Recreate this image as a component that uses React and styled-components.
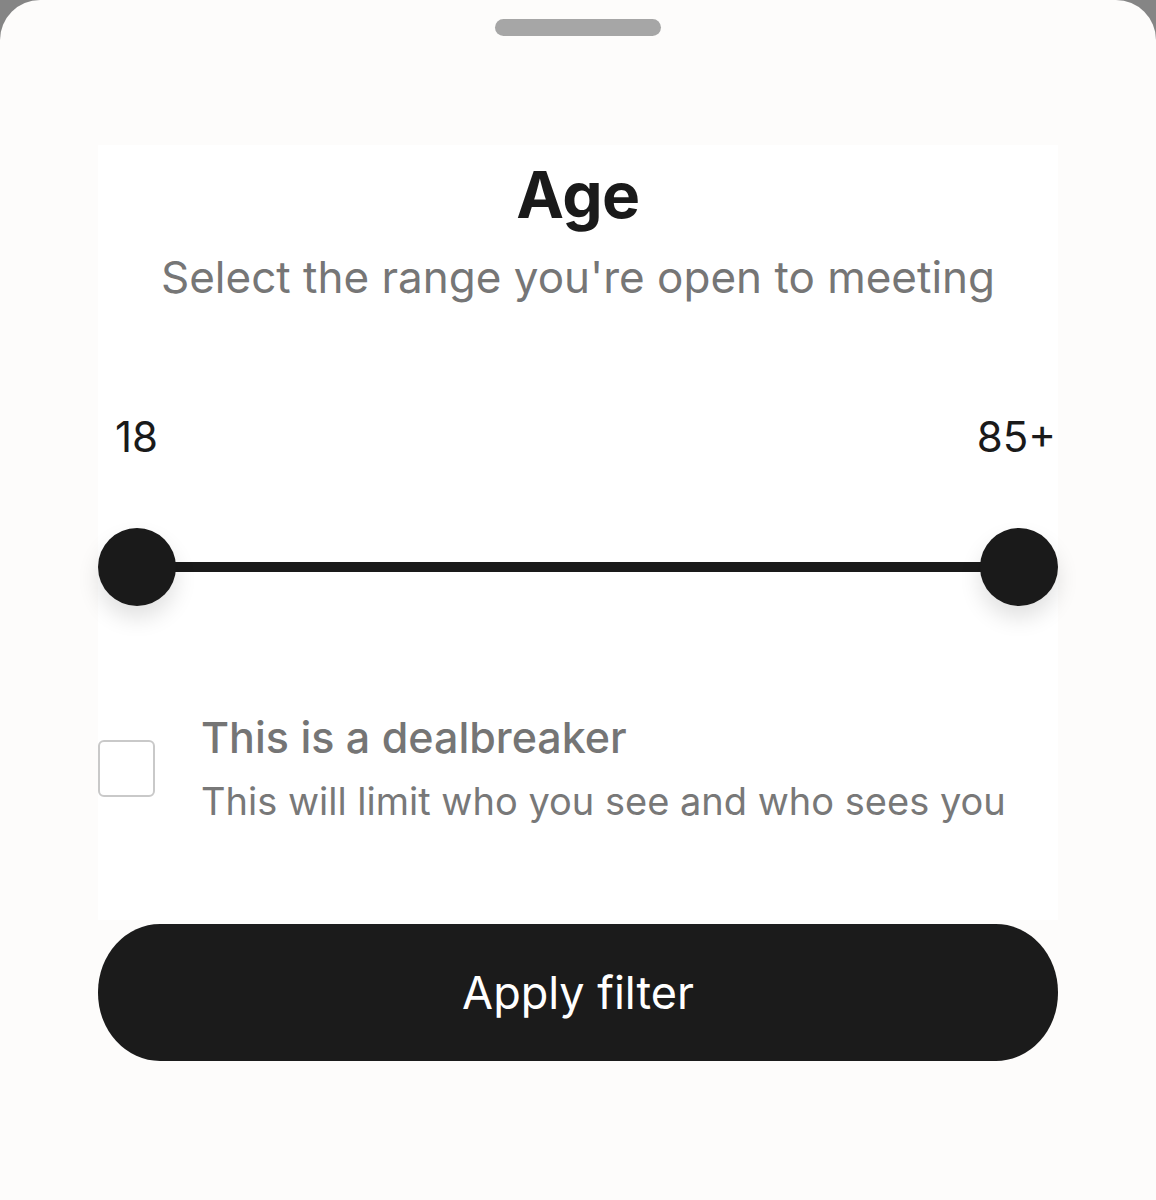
import React from 'react';
import styled, { createGlobalStyle } from 'styled-components';

const Global = createGlobalStyle`
  body {
    margin: 0;
    background: #858585;
    font-family: Inter, "Noto Sans", "Liberation Sans", sans-serif;
  }
`;

const Sheet = styled.div`
  min-height: 1200px;
  box-sizing: border-box;
  background: #fdfcfb;
  border-radius: 40px 40px 0 0;
  padding: 19px 98px 0;
  display: flex;
  flex-direction: column;
`;

const Handle = styled.div`
  align-self: center;
  width: 166px;
  height: 17px;
  border-radius: 9px;
  background: #a6a6a6;
`;

const Panel = styled.div`
  margin-top: 109px;
  padding: 12px 0 0;
  height: 775px;
  box-sizing: border-box;
  background: #ffffff;
  display: flex;
  flex-direction: column;
`;

const Title = styled.h1`
  margin: 0;
  text-align: center;
  font-size: 64px;
  line-height: 76px;
  font-weight: 700;
  color: #1a1a1a;
  letter-spacing: -0.5px;
`;

const Subtitle = styled.p`
  margin: 17px 0 0;
  text-align: center;
  font-size: 44px;
  line-height: 54px;
  font-weight: 400;
  color: #767676;
`;

const Values = styled.div`
  margin-top: 108px;
  display: flex;
  justify-content: space-between;
  padding: 0 2px 0 17px;
  font-size: 42px;
  line-height: 50px;
  color: #1a1a1a;
`;

const Slider = styled.div`
  margin-top: 66px;
  height: 78px;
  display: flex;
  align-items: center;
`;

const Thumb = styled.div`
  flex: none;
  width: 78px;
  height: 78px;
  border-radius: 50%;
  background: #1a1a1a;
  box-shadow: 0 12px 22px rgba(0, 0, 0, 0.12);
  position: relative;
  z-index: 1;
`;

const Track = styled.div`
  flex: 1;
  height: 10px;
  margin: 0 -2px;
  background: #1a1a1a;
`;

const Option = styled.div`
  margin-top: 106px;
  display: flex;
  align-items: flex-start;
  gap: 46px;
`;

const Checkbox = styled.div`
  flex: none;
  margin-top: 28px;
  width: 53px;
  height: 53px;
  border: 2px solid #c9c9c9;
  border-radius: 6px;
  background: #fff;
`;

const OptionText = styled.div`
  display: flex;
  flex-direction: column;
`;

const OptionTitle = styled.div`
  font-size: 43px;
  line-height: 50px;
  font-weight: 500;
  color: #757575;
`;

const OptionNote = styled.div`
  margin-top: 16px;
  font-size: 38px;
  line-height: 46px;
  color: #787878;
`;

const ApplyButton = styled.button`
  margin-top: 4px;
  height: 137px;
  border: none;
  border-radius: 62px / 68px;
  background: #1b1b1b;
  color: #ffffff;
  font-family: inherit;
  font-size: 45px;
  font-weight: 400;
`;

export default function App() {
  return (
    <>
      <Global />
      <Sheet>
        <Handle />
        <Panel>
          <Title>Age</Title>
          <Subtitle>Select the range you're open to meeting</Subtitle>
          <Values>
            <span>18</span>
            <span>85+</span>
          </Values>
          <Slider>
            <Thumb />
            <Track />
            <Thumb />
          </Slider>
          <Option>
            <Checkbox />
            <OptionText>
              <OptionTitle>This is a dealbreaker</OptionTitle>
              <OptionNote>This will limit who you see and who sees you</OptionNote>
            </OptionText>
          </Option>
        </Panel>
        <ApplyButton>Apply filter</ApplyButton>
      </Sheet>
    </>
  );
}
